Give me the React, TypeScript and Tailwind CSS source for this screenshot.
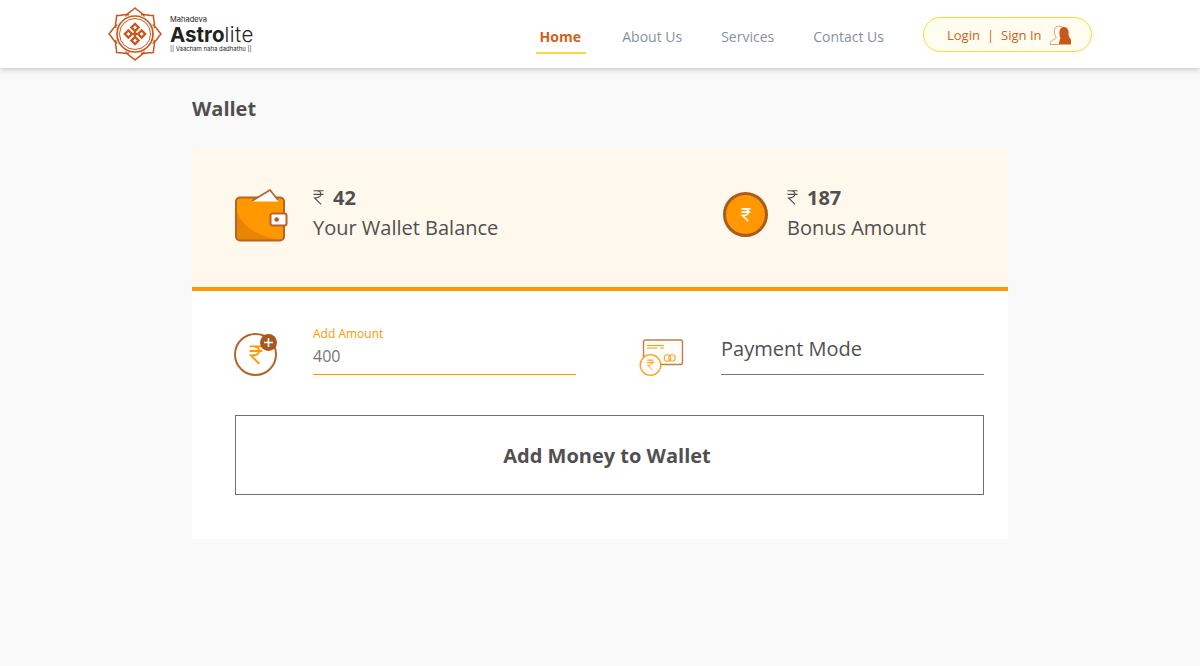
const Logo = () => (
  <svg width="54" height="54" viewBox="0 0 54 54" fill="none" stroke="#c8571b" strokeWidth="1.5">
    <g transform="translate(27 27)">
      {[0, 45, 90, 135, 180, 225, 270, 315].map((a) => (
        <path key={a} transform={`rotate(${a})`} d="M-9 -17.5 C-9.5 -20 -4 -22 0 -26 C4 -22 9.5 -20 9 -17.5" />
      ))}
      <circle r="18" strokeWidth="1.7" />
      <circle r="15.5" strokeWidth="1" />
      <g fill="#c8571b" stroke="none">
        {[[0, -6.6], [0, 6.6], [-6.6, 0], [6.6, 0]].map(([x, y], i) => (
          <path key={i} transform={`translate(${x} ${y}) rotate(45)`} fillRule="evenodd" d="M-3.7 -3.7H3.7V3.7H-3.7Z M-1.4 -1.4V1.4H1.4V-1.4Z" />
        ))}
        <path transform="rotate(45)" d="M-2 -2H2V2H-2Z" />
      </g>
    </g>
  </svg>
);

const Rupee = ({ w, h, color, sw = 1.5 }: { w: number; h: number; color: string; sw?: number }) => (
  <svg width={w} height={h} viewBox="2.5 1.5 11 14.5" fill="none" stroke={color} strokeWidth={sw} strokeLinecap="butt" strokeLinejoin="miter" className="overflow-visible">
    <path d="M3 2H13M3 5.6H13M6 2C9 2 10.4 3.6 10.4 5.6C10.4 7.8 8.8 9.2 4 9.2L10.6 15.6" />
  </svg>
);

const WalletIcon = () => (
  <svg width="54" height="54" viewBox="0 0 54 54" className="shrink-0">
    <rect x="1" y="9.5" width="48" height="43" rx="4" fill="#ff9800" />
    <path d="M1.5 22 C6 38 22 48 44 52 H6 C3.5 52 1.5 50 1.5 48Z" fill="#e98503" />
    <rect x="1" y="9.5" width="48" height="43" rx="4" fill="none" stroke="#b5642a" strokeWidth="2" />
    <path d="M17 13.5 L35 2 L43 12.5 L43 13.5Z" fill="#fff" />
    <path d="M17 13 L35 2 L43 12" fill="none" stroke="#b5642a" strokeWidth="1.8" strokeLinejoin="round" />
    <rect x="35.5" y="25.5" width="16" height="12" rx="2" fill="#fff" stroke="#b5642a" strokeWidth="2" />
    <circle cx="41.7" cy="31.5" r="2.3" fill="#c8571b" />
  </svg>
);

const AddIcon = () => (
  <div className="relative w-[44px] h-[44px] shrink-0 ml-[-1px]">
    <div className="w-[43px] h-[43px] mt-[2px] rounded-full border-2 border-[#b5642a] flex items-center justify-center">
      <Rupee w={14} h={20} color="#ff9800" sw={1.5} />
    </div>
    <div className="absolute top-[1px] right-[1px] w-[17px] h-[17px] rounded-full bg-[#a9561f] flex items-center justify-center">
      <svg width="11" height="11" viewBox="0 0 11 11" stroke="#fff" strokeWidth="1.6"><path d="M5.5 1V10M1 5.5H10" /></svg>
    </div>
  </div>
);

const CardIcon = () => (
  <svg width="46" height="38" viewBox="0 0 46 38" fill="none" className="shrink-0">
    <rect x="4.5" y="1" width="39" height="24.5" rx="2" fill="#fffdf9" stroke="#c47d45" strokeWidth="1.4" />
    <path d="M8 6.5H25M8 9H18M21 9H25" stroke="#ff9800" strokeWidth="1.1" />
    <circle cx="28.5" cy="19" r="3.2" stroke="#ff9f1c" strokeWidth="1.1" />
    <circle cx="33" cy="19" r="3.2" stroke="#ff9f1c" strokeWidth="1.1" />
    <circle cx="11.5" cy="26" r="10.3" fill="#fff" stroke="#ff9f1c" strokeWidth="1.3" />
    <g transform="translate(7.5 20.5)"><Rupee w={8} h={11} color="#ff9800" sw={1.3} /></g>
  </svg>
);

const UserIcon = () => (
  <svg width="23" height="20" viewBox="0 0 23 20">
    <path d="M1 19.5 C1 16 3 15.5 6 14 C7 13.5 7.5 12.5 6.5 11 C4.5 8 4.5 1 10 1 C13 1 14 3 14 4" fill="none" stroke="#e3935f" strokeWidth="0.9" />
    <path d="M1 19.5H10" stroke="#e3935f" strokeWidth="0.9" />
    <path d="M10 19.5 C10 15 12 14 11 12 C10 8 10 2 15 2 C19 2 20 6 19.5 9 C19.5 12 21 13 22 14.5 V19.5Z" fill="#c9581c" />
  </svg>
);

const Balance = ({ amount, label }: { amount: string; label: string }) => (
  <div className="text-[#505050]">
    <div className="flex items-center h-[30px]">
      <Rupee w={11} h={15} color="#505050" sw={1.1} />
      <span className="ml-[9px] text-[20px] font-bold leading-[30px]">{amount}</span>
    </div>
    <div className="text-[20px] leading-[30px] whitespace-nowrap">{label}</div>
  </div>
);

export default function App() {
  return (
    <div className="min-h-[666px] bg-[#f9f9f9] font-['Open_Sans',sans-serif] text-[#505050]">
      <header className="h-[68px] bg-white shadow-[0_1px_6px_rgba(0,0,0,0.25)] flex items-center pl-[108px] pr-[108px] relative">
        <div className="flex items-center">
          <Logo />
          <div className="ml-[8px] font-['Inter',sans-serif] text-[#222]">
            <div className="text-[7.5px] leading-[9px]">Mahadeva</div>
            <div className="text-[20.5px] leading-[21px]">
              <span className="font-bold">Astro</span><span className="font-light tracking-[0.5px]">lite</span>
            </div>
            <div className="text-[6px] leading-[8px] whitespace-nowrap">|| Vaacham naha dadhathu ||</div>
          </div>
        </div>
        <nav className="ml-auto flex items-center text-[14px] self-start">
          <a className="w-[50px] mr-[36px] pt-[27px] pb-[6px] pr-[2px] border-b-2 border-[#fbd93a] text-center font-bold text-[#d35f1a] h-[54px] leading-[19px]">Home</a>
          <a className="mr-[39px] pt-[27px] h-[54px] leading-[19px] text-[#8790a3]">About Us</a>
          <a className="mr-[39px] pt-[27px] h-[54px] leading-[19px] text-[#8790a3]">Services</a>
          <a className="mr-[39px] pt-[27px] h-[54px] leading-[19px] text-[#8790a3]">Contact Us</a>
        </nav>
        <div className="w-[169px] h-[35px] mt-[1px] rounded-full border border-[#fbd93a] bg-[#fffcf0] flex items-center pl-[23px] text-[13px] text-[#d35f1a]">
          <span className="pt-[2px]">Login</span>
          <span className="mx-[7px] pt-[2px]">|</span>
          <span className="pt-[2px]">Sign In</span>
          <span className="ml-[7px]"><UserIcon /></span>
        </div>
      </header>

      <main className="w-[816px] mx-auto">
        <h1 className="text-[20px] font-bold leading-[27px] pt-[27px] h-[80px]">Wallet</h1>
        <section className="h-[143px] bg-[#fff8ec] border-b-4 border-[#ff9800] flex items-center pl-[43px] pb-[10px]">
          <div className="w-[488px] flex items-center">
            <div className="mt-[5px]"><WalletIcon /></div>
            <div className="ml-[24px]"><Balance amount="42" label="Your Wallet Balance" /></div>
          </div>
          <div className="flex items-center">
            <div className="mt-[4px] w-[45px] h-[45px] rounded-full bg-[#ff9800] border-[3px] border-[#ad5a1f] flex items-center justify-center">
              <Rupee w={10} h={14} color="#fff" sw={1.7} />
            </div>
            <div className="ml-[19px]"><Balance amount="187" label="Bonus Amount" /></div>
          </div>
        </section>
        <section className="bg-white h-[248px] pl-[43px] pr-[24px] pt-[34px]">
          <div className="flex items-start h-[90px]">
            <div className="mt-[6px]"><AddIcon /></div>
            <div className="ml-[35px] w-[263px] h-[50px] border-b border-[#ff9800]">
              <div className="text-[12px] leading-[17px] text-[#ff9800]">Add Amount</div>
              <div className="text-[16px] leading-[22px] mt-[3px] text-[#757575]">400</div>
            </div>
            <div className="ml-[63px] mt-[14px]"><CardIcon /></div>
            <div className="ml-[36px] w-[263px] h-[50px] border-b border-[#757575] text-[20px] leading-[27px] pt-[10px]">Payment Mode</div>
          </div>
          <button className="w-[749px] h-[80px] border border-[#6f6f6f] flex items-center justify-center pr-[5px] pt-[2px] text-[20px] font-bold text-[#505050]">
            Add Money to Wallet
          </button>
        </section>
      </main>
    </div>
  );
}
